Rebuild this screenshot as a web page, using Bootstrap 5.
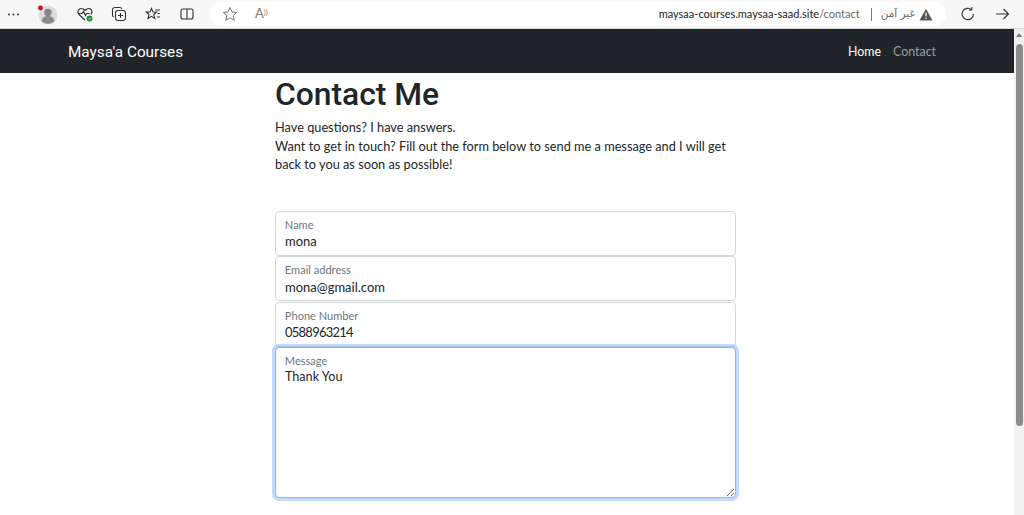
<!DOCTYPE html>
<html lang="en">
<head>
<meta charset="utf-8">
<title>Contact</title>
<link href="https://cdn.jsdelivr.net/npm/bootstrap@5.3.0/dist/css/bootstrap.min.css" rel="stylesheet">
<style>
html,body{height:515px;overflow:hidden;background:#fff}
body{font-family:Lato,Roboto,sans-serif;color:#212529;font-size:13.5px}
.chrome-bar{height:29px;background:#f7f7f7;border-bottom:1px solid #d8d8d8;padding-left:5px;color:#333}
.chrome-btn{flex:none;display:flex;align-items:center;justify-content:center}
.addr{height:24px;background:#fff;border-radius:12px;width:736px;flex:none;font-size:11px;color:#222;padding:0 13px 0 12px}
.addr .dim{color:#666}
.addr-star{margin-right:17px}
.addr-read{color:#777;font-size:13px}
.addr-read sup{font-size:7px}
.addr-sep{width:1px;height:13px;background:#777;margin:0 9px 0 11px}
.rtl-txt{font-family:"DejaVu Sans",sans-serif;font-size:10.5px;color:#666}
.view{height:486px}
.page{flex:1 1 auto;min-width:0}
.scroll-track{width:10px;flex:none;background:#f1f1f1;position:relative}
.scroll-thumb{position:absolute;left:2px;right:1px;top:15px;height:382px;background:#8b8b8b;border-radius:4px}
.scroll-arrow{position:absolute;left:2px;top:4px;width:0;height:0;border:3px solid transparent;border-bottom:4px solid #777;border-top:0}
.top-nav{height:44px;background:#212529;padding:2px 78px 0 68px}
.top-nav .brand{font-family:Roboto,sans-serif;font-size:15.300px;color:#fff;text-decoration:none}
.top-nav a{font-size:12.400px;text-decoration:none}
.nav-on{color:#fff}
.nav-off{color:#9a9c9e}
.col-main{width:461px;margin-left:275px}
.head-main{font-family:Roboto,sans-serif;font-size:31.800px;font-weight:500;line-height:38px;margin:2px 0 5px;color:#212529}
.intro{line-height:18.600px;margin:0 0 37px;font-size:12.750px}
.field{margin-bottom:0}
.stack .field .form-control{height:45px;min-height:45px;border-radius:4px;padding:20px 9px 4px;font-size:13px;line-height:18px;color:#212529;font-family:inherit;border-color:#d5d8db}
.stack .field .tight-digits{letter-spacing:-.75px}
.field>label{padding:7px 10px;font-size:13px;height:auto;color:#6c757d;transform:scale(.85) translateY(0) translateX(.1rem)!important;opacity:1!important;line-height:18px;border:0;transform-origin:0 0}
.field>label::after{display:none}
.stack .field textarea.form-control{height:151px;padding-top:20px;font-size:12.600px;line-height:18px;border-color:#86b7fe;box-shadow:0 0 0 3px rgba(13,110,253,.25)}
.stack{display:flex;flex-direction:column;gap:.5px}
</style>
</head>
<body class="m-0">
<div class="chrome-bar d-flex align-items-center">
  <span class="chrome-btn" style="width:16px"><svg width="13" height="3" viewBox="0 0 13 3"><circle cx="2" cy="1.5" r="1" fill="#333"/><circle cx="6.5" cy="1.5" r="1" fill="#333"/><circle cx="11" cy="1.5" r="1" fill="#333"/></svg></span>
  <span class="chrome-btn" style="width:22px;margin-left:16px"><svg width="22" height="24" viewBox="0 0 22 24"><circle cx="11" cy="13" r="9.5" fill="#ddd"/><circle cx="11" cy="10.5" r="3.7" fill="#888"/><path d="M4.5 19c1-4 3.5-5 6.5-5s5.500 1 6.500 5c-3 3.500-10 3.500-13 0z" fill="#888"/><circle cx="3.500" cy="6" r="2.400" fill="#c4161c"/></svg></span>
  <span class="chrome-btn" style="width:18px;margin-left:17px"><svg width="18" height="18" viewBox="0 0 18 18" fill="none" stroke="#333" stroke-width="1.200"><path d="M9 15 3 9.500C.8 7 2.500 3.500 5.200 3.500 7 3.500 8 4.500 9 5.500 10 4.500 11 3.500 12.800 3.500 15.500 3.500 17 7 15 9.500"/><path d="M2.500 8.500h3.500l1.500-2 2 4 1.200-2h3"/><circle cx="13.500" cy="13.500" r="3" fill="#1b8a3a" stroke="none"/><path d="M12.200 13.500l1 1 1.800-1.800" stroke="#fff" stroke-width=".8"/></svg></span>
  <span class="chrome-btn" style="width:16px;margin-left:17px"><svg width="16" height="16" viewBox="0 0 16 16" fill="none" stroke="#333" stroke-width="1.100"><rect x="4.500" y="4.500" width="10" height="10" rx="2.500"/><path d="M2.800 11A2.500 2.500 0 0 1 1.500 9V4A2.500 2.500 0 0 1 4 1.500h5A2.500 2.500 0 0 1 11 2.800M9.500 7v5M7 9.500h5"/></svg></span>
  <span class="chrome-btn" style="width:16px;margin-left:18px"><svg width="16" height="16" viewBox="0 0 16 16" fill="none" stroke="#333" stroke-width="1.100"><path d="M6.500 2.500 8 6H11.500L8.800 8.500 9.800 12.500 6.500 10.300 3 12.500 4 8.500 1.200 6H5z"/><path d="M10.500 4h4.500M12.500 7.500h2.500M12 11h3"/></svg></span>
  <span class="chrome-btn" style="width:14px;margin-left:19px"><svg width="14" height="14" viewBox="0 0 14 14" fill="none" stroke="#333" stroke-width="1.100"><rect x="1" y="2" width="12" height="10" rx="2"/><path d="M7 2v10"/></svg></span>
  <div class="addr d-flex align-items-center" style="margin-left:16px">
    <svg class="addr-star" width="16" height="16" viewBox="0 0 16 16" fill="none" stroke="#777" stroke-width="1"><path d="M8 1.500 10 6l4.800.4-3.600 3.200 1.100 4.800L8 11.800 3.700 14.400l1.100-4.800L1.200 6.400 6 6z"/></svg>
    <span class="addr-read">A<sup>))</sup></span>
    <span class="ms-auto">maysaa-courses.maysaa-saad.site<span class="dim">/contact</span></span>
    <span class="addr-sep"></span>
    <span class="rtl-txt" dir="rtl">غير آمن</span>
    <svg class="ms-1" width="14" height="13" viewBox="0 0 14 13"><path d="M7 .8 13.500 12.500H.5z" fill="#555"/><path d="M7 4.500v4M7 9.800v1.200" stroke="#fff" stroke-width="1.200"/></svg>
  </div>
  <span class="chrome-btn" style="width:16px;margin-left:14px"><svg width="16" height="16" viewBox="0 0 16 16" fill="none" stroke="#333" stroke-width="1.100"><path d="M13.500 8A5.700 5.700 0 1 1 11.500 3.600M11.800 1v3h-3"/></svg></span>
  <span class="chrome-btn" style="width:16px;margin-left:18px"><svg width="16" height="16" viewBox="0 0 16 16" fill="none" stroke="#333" stroke-width="1.100"><path d="M2 8h12.500M9.500 3l5 5-5 5"/></svg></span>
</div>
<div class="view d-flex">
  <div class="page">
    <nav class="top-nav d-flex align-items-center justify-content-between">
      <a class="brand" href="#">Maysa'a Courses</a>
      <div class="d-flex gap-2"><a class="nav-on me-1" href="#">Home</a><a class="nav-off" href="#">Contact</a></div>
    </nav>
    <main class="col-main">
      <h1 class="head-main">Contact Me</h1>
      <p class="intro">Have questions? I have answers.<br>Want to get in touch? Fill out the form below to send me a message and I will get back to you as soon as possible!</p>
      <form class="stack">
        <div class="form-floating field"><input class="form-control" id="n" type="text" value="mona" placeholder="Name"><label for="n">Name</label></div>
        <div class="form-floating field"><input class="form-control" id="e" type="email" value="mona@gmail.com" placeholder="Email"><label for="e">Email address</label></div>
        <div class="form-floating field"><input class="form-control tight-digits" id="p" type="tel" value="0588963214" placeholder="Phone"><label for="p">Phone Number</label></div>
        <div class="form-floating field"><textarea class="form-control" id="m" placeholder="Message">Thank You</textarea><label for="m">Message</label></div>
      </form>
    </main>
  </div>
  <div class="scroll-track"><span class="scroll-arrow"></span><span class="scroll-thumb"></span></div>
</div>
</body>
</html>
